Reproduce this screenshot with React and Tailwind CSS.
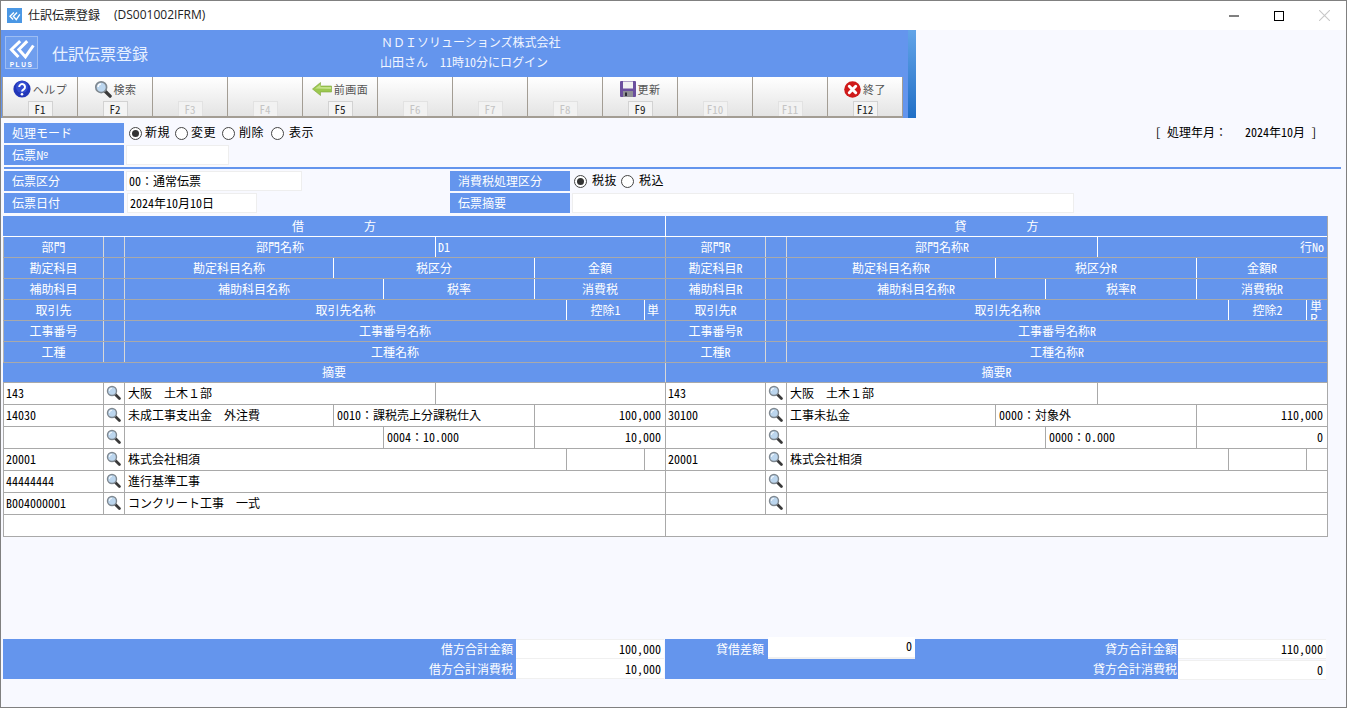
import React from 'react';

// header rows of the slip grid (same column widths on both sides)
const headerRows = [
  [
    { w: 'w-[100px]', t: '部門', f: '部門R' },
    { w: 'w-[21px]' },
    { w: 'w-[311px]', t: '部門名称', f: '部門名称R' },
    { w: 'w-[230px]', t: 'D1', f: '行No', leftAlign: true },
  ],
  [
    { w: 'w-[100px]', t: '勘定科目', f: '勘定科目R' },
    { w: 'w-[21px]' },
    { w: 'w-[209px]', t: '勘定科目名称', f: '勘定科目名称R' },
    { w: 'w-[201px]', t: '税区分', f: '税区分R' },
    { w: 'w-[131px]', t: '金額', f: '金額R' },
  ],
  [
    { w: 'w-[100px]', t: '補助科目', f: '補助科目R' },
    { w: 'w-[21px]' },
    { w: 'w-[259px]', t: '補助科目名称', f: '補助科目名称R' },
    { w: 'w-[151px]', t: '税率', f: '税率R' },
    { w: 'w-[131px]', t: '消費税', f: '消費税R' },
  ],
  [
    { w: 'w-[100px]', t: '取引先', f: '取引先R' },
    { w: 'w-[21px]' },
    { w: 'w-[442px]', t: '取引先名称', f: '取引先名称R' },
    { w: 'w-[78px]', t: '控除1', f: '控除2' },
    { w: 'w-[21px]', t: '単', f: '単R', tiny: true },
  ],
  [
    { w: 'w-[100px]', t: '工事番号', f: '工事番号R' },
    { w: 'w-[21px]' },
    { w: 'w-[541px]', t: '工事番号名称', f: '工事番号名称R' },
  ],
  [
    { w: 'w-[100px]', t: '工種', f: '工種R' },
    { w: 'w-[21px]' },
    { w: 'w-[541px]', t: '工種名称', f: '工種名称R' },
  ],
];

// data rows: left side / right side values
const dataRows = [
  {
    cols: ['w-[311px]', 'w-[230px]'],
    left: ['143', '大阪　土木１部', ''],
    right: ['143', '大阪　土木１部', ''],
  },
  {
    cols: ['w-[209px]', 'w-[201px]', 'w-[131px]'],
    left: ['14030', '未成工事支出金　外注費', '0010：課税売上分課税仕入', '100,000'],
    right: ['30100', '工事未払金', '0000：対象外', '110,000'],
    lastRight: true,
  },
  {
    cols: ['w-[259px]', 'w-[151px]', 'w-[131px]'],
    left: ['', '', '0004：10.000', '10,000'],
    right: ['', '', '0000：0.000', '0'],
    lastRight: true,
  },
  {
    cols: ['w-[442px]', 'w-[78px]', 'w-[21px]'],
    left: ['20001', '株式会社相須', '', ''],
    right: ['20001', '株式会社相須', '', ''],
  },
  { cols: ['w-[541px]'], left: ['44444444', '進行基準工事'], right: ['', ''] },
  { cols: ['w-[541px]'], left: ['B004000001', 'コンクリート工事　一式'], right: ['', ''] },
];

const fKeys = [
  { key: 'F1', label: 'ヘルプ', icon: 'help' },
  { key: 'F2', label: '検索', icon: 'search' },
  { key: 'F3' },
  { key: 'F4' },
  { key: 'F5', label: '前画面', icon: 'back' },
  { key: 'F6' },
  { key: 'F7' },
  { key: 'F8' },
  { key: 'F9', label: '更新', icon: 'save' },
  { key: 'F10' },
  { key: 'F11' },
  { key: 'F12', label: '終了', icon: 'close' },
];

// half-width latin like the original gothic face, CJK runs stay full width
function T({ children }) {
  if (!children) return null;
  return String(children)
    .split(/([\x20-\x7e]+)/)
    .map((part, i) =>
      /^[\x20-\x7e]+$/.test(part) ? (
        <span key={i} className="[font-feature-settings:'hwid']">{part}</span>
      ) : (
        part
      )
    );
}

function Chevrons({ className }) {
  return (
    <svg viewBox="0 0 33 24" className={className} fill="none" stroke="#fff" strokeWidth="3.4" strokeLinejoin="miter">
      <polyline points="15,3 5,12.5 13,21" />
      <polyline points="23,3 13.5,12.5 21,21 30,8" />
    </svg>
  );
}

function Logo() {
  return (
    <div className="w-[33px] h-[33px] border border-[#9dbdf3] bg-[#6f9eee] flex flex-col items-center">
      <Chevrons className="w-[29px] h-[22px] mt-[1px]" />
      <svg viewBox="0 0 31 8" className="w-[31px] h-[8px]">
        <text x="15.5" y="7" textAnchor="middle" fontSize="6.5" fontWeight="700" letterSpacing="1.6" fill="#fff" fontFamily="Liberation Sans, sans-serif">PLUS</text>
      </svg>
    </div>
  );
}

function Magnifier({ size = 'w-[15px] h-[15px]' }) {
  return (
    <svg viewBox="0 0 16 16" className={size}>
      <line x1="9.5" y1="9.5" x2="14.3" y2="14.3" stroke="#3a3a3a" strokeWidth="3" strokeLinecap="round" />
      <circle cx="6.4" cy="6.4" r="4.8" fill="#bcd6ee" stroke="#7f8890" strokeWidth="1.5" />
      <path d="M3.6 6.2a3 3 0 0 1 2.6-2.7" stroke="#fff" strokeWidth="1.2" fill="none" />
    </svg>
  );
}

function ToolIcon({ name }) {
  if (name === 'help') {
    return (
      <svg viewBox="0 0 18 18" className="w-[18px] h-[18px]">
        <circle cx="9" cy="9" r="8.6" fill="#2236b8" />
        <circle cx="9" cy="7" r="6" fill="#3f5ce0" opacity="0.6" />
        <path d="M6.2 7a2.9 2.9 0 1 1 4.5 2.4C9.6 10.1 9 10.6 9 11.6" fill="none" stroke="#fff" strokeWidth="2" />
        <circle cx="9" cy="14.2" r="1.3" fill="#fff" />
      </svg>
    );
  }
  if (name === 'search') return <Magnifier size="w-[18px] h-[18px]" />;
  if (name === 'back') {
    return (
      <svg viewBox="0 0 20 14" className="w-[20px] h-[14px]">
        <polygon points="0.5,7 8.5,0.5 8.5,4 19.5,4 19.5,10 8.5,10 8.5,13.5" fill="#9cc850" stroke="#7da53a" strokeWidth="0.6" />
        <polygon points="3,6.5 8.5,2.5 8.5,5 19,5 19,7" fill="#c4e288" />
      </svg>
    );
  }
  if (name === 'save') {
    return (
      <svg viewBox="0 0 16 16" className="w-[16px] h-[16px]">
        <rect x="0" y="0" width="16" height="16" rx="1" fill="#6b4f9e" />
        <rect x="3" y="0.5" width="10" height="7" fill="#f1f1f1" />
        <rect x="3" y="10" width="10" height="6" fill="#8f8f95" />
        <rect x="5" y="11.5" width="2" height="3.5" fill="#2c2c33" />
      </svg>
    );
  }
  return (
    <svg viewBox="0 0 17 17" className="w-[17px] h-[17px]">
      <circle cx="8.5" cy="8.5" r="8.3" fill="#cf1a1a" />
      <path d="M5.3 5.3l6.4 6.4M11.7 5.3l-6.4 6.4" stroke="#fff" strokeWidth="3" strokeLinecap="round" />
    </svg>
  );
}

function Radio({ checked, label, className = '', textClass = 'ml-[3px]' }) {
  return (
    <div className={`flex items-center ${className}`}>
      <span className="w-[13px] h-[13px] rounded-full border border-[#444] bg-white flex items-center justify-center">
        {checked && <span className="w-[7px] h-[7px] rounded-full bg-[#333]" />}
      </span>
      <span className={`text-black tracking-[0.5px] leading-[18px] mb-[2px] ${textClass}`}>{label}</span>
    </div>
  );
}

function FieldLabel({ children }) {
  return <div className="w-[120px] h-[20px] bg-[#6495ed] text-white pl-[8px] leading-[19px] shrink-0">{children}</div>;
}

function HeaderHalf({ row, side }) {
  return (
    <div className="flex w-[662px]">
      {row.map((c, i) => {
        const text = side === 'left' ? c.t : c.f;
        const stacked = c.tiny && side === 'right';
        return (
          <div
            key={i}
            className={`${c.w} h-full border-l shrink-0 overflow-hidden ${i === 0 ? 'border-l-[#b4b4b4]' : i === 1 || i === 2 ? 'border-l-[#d8d8d8]' : 'border-l-white'} ${
              stacked ? 'text-left pl-[3px] leading-[12px]' : c.tiny ? 'text-left pl-[2px] leading-[19px]' : 'text-center leading-[19px]'
            } ${c.leftAlign ? (side === 'left' ? '!text-left pl-[2px]' : '!text-right pr-[3px]') : ''}`}
          >
            {stacked ? (
              <>
                単<br />R
              </>
            ) : (
              <T>{text}</T>
            )}
          </div>
        );
      })}
    </div>
  );
}

function DataHalf({ vals, cols, lastRight }) {
  return (
    <div className="flex w-[662px]">
      <div className="w-[100px] h-full border-l border-[#a9a9a9] pl-[2px] leading-[20px] shrink-0">
        <T>{vals[0]}</T>
      </div>
      <div className="w-[21px] h-full border-l border-[#a9a9a9] flex items-center justify-center pb-[2px] pr-[1px] shrink-0">
        <Magnifier />
      </div>
      {cols.map((w, i) => {
        const right = lastRight && i === cols.length - 1;
        return (
          <div key={i} className={`${w} h-full border-l border-[#a9a9a9] leading-[20px] shrink-0 overflow-hidden whitespace-nowrap ${right ? 'text-right pr-[4px]' : 'pl-[3px]'}`}>
            <T>{vals[i + 1]}</T>
          </div>
        );
      })}
    </div>
  );
}

function FKeyButton({ item }) {
  const enabled = !!item.label;
  return (
    <div className="w-[75px] h-full border-r border-r-[#a39d94] bg-gradient-to-b from-white to-[#e4e4e4] flex flex-col items-center relative">
      <div className="h-[25px] flex items-center justify-center text-[11px] text-[#555] tracking-[0.5px]">
        {item.icon && <ToolIcon name={item.icon} />}
        {item.label && <span className="ml-[2px]">{item.label}</span>}
      </div>
      <div
        className={`w-[25px] h-[15px] mt-auto text-[11px] leading-[15px] text-center border-t border-x ${
          enabled ? 'bg-[#f4f4f4] border-[#d2d2d2] text-[#222]' : 'bg-[#f2f2f2] border-[#e2e2e2] text-[#c4c4c4]'
        }`}
      >
        <T>{item.key}</T>
      </div>
    </div>
  );
}

export default function App() {
  return (
    <div className="w-[1347px] h-[708px] border border-[#808080] bg-[#f8f9ff] overflow-hidden text-[12px] text-black font-['Noto_Sans_CJK_JP','Liberation_Sans',sans-serif]">
      {/* Window title bar */}
      <div className="h-[29px] bg-white flex items-center pl-[6px]">
        <div className="w-[15px] h-[15px] bg-[#4a97e4] flex items-center justify-center">
          <Chevrons className="w-[13px] h-[10px]" />
        </div>
        <span className="ml-[6px] text-[12px] text-[#222] leading-[26px] mb-[2px]">仕訳伝票登録</span>
        <span className="ml-[14px] text-[12px] text-[#222] leading-[26px] mb-[2px] font-['Open_Sans',sans-serif]">(DS001002IFRM)</span>
        <div className="ml-auto flex items-center text-black">
          <svg viewBox="0 0 10 10" className="w-[10px] h-[10px]">
            <line x1="0" y1="5" x2="10" y2="5" stroke="#000" strokeWidth="1" />
          </svg>
          <svg viewBox="0 0 10 10" className="w-[10px] h-[10px] ml-[35px]">
            <rect x="0.5" y="0.5" width="9" height="9" fill="none" stroke="#000" strokeWidth="1" />
          </svg>
          <svg viewBox="0 0 10 10" className="w-[11px] h-[11px] ml-[35px] mr-[16px]">
            <path d="M0 0l10 10M10 0L0 10" stroke="#c8c8c8" strokeWidth="1" />
          </svg>
        </div>
      </div>

      {/* Blue header + function keys */}
      <div className="w-[915px] flex">
        <div className="w-[907px]">
          <div className="h-[47px] bg-[#6495ed] flex pl-[4px] pt-[6px]">
            <Logo />
            <div className="w-[342px] pl-[14px] text-[16px] leading-[34px] text-[#e8f1ff]">仕訳伝票登録</div>
            <div className="text-[#f2f6ff] text-[12px] leading-[20px] -mt-[4px]">
              <div className="whitespace-nowrap pl-[1px]">ＮＤＩソリューションズ株式会社</div>
              <div className="whitespace-nowrap">
                <T>山田さん　11時10分にログイン</T>
              </div>
            </div>
          </div>
          <div className="h-[41px] bg-[#6495ed] flex pl-[1px]">
            <div className="flex border-l border-[#a39d94] border-b-2 border-b-[#a39d94]">
              {fKeys.map((item) => (
                <FKeyButton key={item.key} item={item} />
              ))}
            </div>
          </div>
        </div>
        <div className="w-[8px] bg-gradient-to-b from-[#62a4e8] to-[#1f6fc6]" />
      </div>

      <div>
        {/* Mode + slip number */}
        <div className="pl-[3px] pt-[5px]">
          <div className="flex items-center w-[1337px] pr-[24px]">
            <FieldLabel>処理モード</FieldLabel>
            <Radio checked label="新規" className="ml-[5px]" />
            <Radio label="変更" className="ml-[5px]" />
            <Radio label="削除" className="ml-[6px]" textClass="ml-[4px]" />
            <Radio label="表示" className="ml-[7px]" textClass="ml-[5px]" />
            <div className="ml-auto whitespace-pre leading-[16px] mb-[3px]">
              <T>{'[ 処理年月：   2024年10月 ]'}</T>
            </div>
          </div>
          <div className="flex mt-[2px]">
            <FieldLabel>伝票№</FieldLabel>
            <div className="ml-[2px] w-[103px] h-[20px] bg-white border border-[#eeeeee]" />
          </div>
          <div className="w-[1337px] h-[2px] bg-[#6495ed] mt-[2px]" />

          {/* Slip type + date */}
          <div className="flex mt-[2px]">
            <div className="w-[446px] flex shrink-0">
              <FieldLabel>伝票区分</FieldLabel>
              <div className="ml-[2px] w-[176px] h-[20px] bg-white border border-[#eeeeee] pl-[2px] leading-[17px]">
                <T>00：通常伝票</T>
              </div>
            </div>
            <FieldLabel>消費税処理区分</FieldLabel>
            <Radio checked label="税抜" className="ml-[4px]" textClass="ml-[5px]" />
            <Radio label="税込" className="ml-[4px]" textClass="ml-[5px]" />
          </div>
          <div className="flex mt-[2px]">
            <div className="w-[446px] flex shrink-0">
              <FieldLabel>伝票日付</FieldLabel>
              <div className="ml-[3px] w-[130px] h-[20px] bg-white border border-[#eeeeee] pl-[2px] leading-[17px]">
                <T>2024年10月10日</T>
              </div>
            </div>
            <FieldLabel>伝票摘要</FieldLabel>
            <div className="ml-[2px] w-[502px] h-[20px] bg-white border border-[#eeeeee]" />
          </div>
        </div>

        {/* Slip grid */}
        <div className="ml-[2px] mt-[3px] w-[1325px] border-r border-[#a9a9a9]">
          <div className="h-[21px] flex bg-[#6495ed] text-white border-b border-white">
            <div className="w-[662px] text-center leading-[19px] whitespace-pre">借　　　　　方</div>
            <div className="w-[662px] border-l border-white text-center leading-[19px] whitespace-pre">貸　　　　　方</div>
          </div>
          {headerRows.map((row, i) => (
            <div key={i} className="h-[21px] flex bg-[#6495ed] text-white border-b border-[#a9a9a9]">
              <HeaderHalf row={row} side="left" />
              <HeaderHalf row={row} side="right" />
            </div>
          ))}
          <div className="h-[20px] flex bg-[#6495ed] text-white border-b border-[#a9a9a9]">
            <div className="w-[662px] text-center leading-[18px]">摘要</div>
            <div className="w-[662px] border-l border-[#d8d8d8] text-center leading-[18px]">
              <T>摘要R</T>
            </div>
          </div>

          {dataRows.map((row, i) => (
            <div key={i} className="h-[22px] flex bg-white border-b border-[#a9a9a9]">
              <DataHalf vals={row.left} cols={row.cols} lastRight={row.lastRight} />
              <DataHalf vals={row.right} cols={row.cols} lastRight={row.lastRight} />
            </div>
          ))}
          <div className="h-[22px] flex bg-white border-b border-[#a9a9a9]">
            <div className="w-[662px] border-l border-[#a9a9a9]" />
            <div className="w-[662px] border-l border-[#a9a9a9]" />
          </div>
        </div>

        {/* Totals */}
        <div className="ml-[2px] mt-[102px] h-[40px] flex text-right">
          <div className="flex flex-col">
            <div className="flex h-[20px]">
              <div className="w-[513px] bg-[#6495ed] text-white pr-[3px] leading-[20px]">借方合計金額</div>
              <div className="w-[148px] bg-white border-y border-[#f0f0f0] pr-[3px] leading-[18px]">
                <T>100,000</T>
              </div>
            </div>
            <div className="flex h-[20px]">
              <div className="w-[513px] bg-[#6495ed] text-white pr-[3px] leading-[19px]">借方合計消費税</div>
              <div className="w-[148px] bg-white border-b border-[#f0f0f0] pr-[3px] leading-[19px]">
                <T>10,000</T>
              </div>
            </div>
          </div>
          <div className="ml-[1px] w-[513px] h-[40px] bg-[#6495ed] flex">
            <div className="w-[100px] text-white pr-[1px] leading-[20px]">貸借差額</div>
            <div className="ml-[3px] w-[147px] h-[22px] -mt-[2px] bg-white border-b-2 border-[#f0f0f0] pr-[3px] leading-[18px]">
              <T>0</T>
            </div>
            <div className="flex-1 text-white pr-[1px]">
              <div className="leading-[20px]">貸方合計金額</div>
              <div className="leading-[19px]">貸方合計消費税</div>
            </div>
          </div>
          <div className="flex flex-col">
            <div className="w-[148px] h-[20px] bg-white border-y border-[#f0f0f0] pr-[3px] leading-[18px]">
              <T>110,000</T>
            </div>
            <div className="w-[148px] h-[20px] mt-[1px] bg-white border-y border-[#f0f0f0] pr-[3px] leading-[18px]">
              <T>0</T>
            </div>
          </div>
        </div>
      </div>
    </div>
  );
}
